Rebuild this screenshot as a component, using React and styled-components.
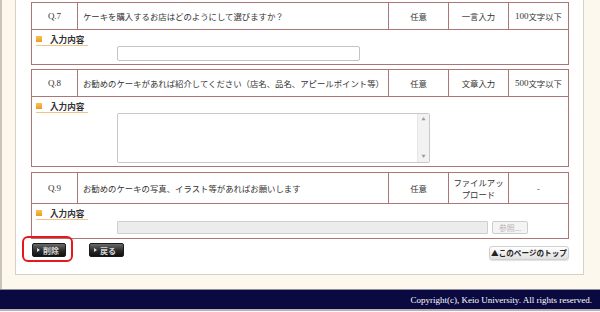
import React from "react";
import styled, { createGlobalStyle } from "styled-components";

const C = "#ad7676";

const Global = createGlobalStyle`
  html, body { margin: 0; padding: 0; }
  body {
    background: #fdf8ed;
    font-family: "Noto Sans CJK JP", "Noto Sans", sans-serif;
    color: #333;
    width: 600px;
    overflow: hidden;
  }
`;

const Main = styled.div`
  border-left: 2px solid #ccc4b8;
  padding: 0 16px 14px 13px;
`;

const Panel = styled.div`
  background: #fff;
  border: 1px solid #d6d0c6;
  border-top: none;
  padding: 2px 14px 14px 15px;
`;

const QBlock = styled.div`
  border: 1px solid ${C};
  margin-bottom: ${(p) => p.$mb || 4}px;
`;

const HeadRow = styled.div`
  display: grid;
  grid-template-columns: 45px 311px 60px 60px 60px;
  min-height: ${(p) => p.$h || 26}px;
  border-bottom: 1px solid ${C};
`;

const Cell = styled.div`
  display: flex;
  align-items: center;
  justify-content: ${(p) => (p.$left ? "flex-start" : "center")};
  text-align: center;
  padding: ${(p) => (p.$left ? "0 0 0 5px" : "0 2px")};
  border-left: ${(p) => (p.$first ? "none" : `1px solid ${C}`)};
  font-size: 8.4px;
  line-height: ${(p) => (p.$wrap ? "12px" : "11px")};
  color: #333;
  white-space: ${(p) => (p.$wrap ? "normal" : "nowrap")};
`;

const Num = styled.span`
  font-family: "Liberation Serif", serif;
  font-size: 9px;
`;

const Body = styled.div`
  padding: 3px 0 ${(p) => p.$pb || 3}px 4px;
`;

const Label = styled.div`
  display: flex;
  align-items: center;
  gap: 8px;
  width: 52px;
  height: 12px;
  border-bottom: 1px solid #f0c488;
  font-size: 8.6px;
  font-weight: bold;
  color: #333;
  white-space: nowrap;
`;

const Square = styled.span`
  width: 6px;
  height: 6px;
  background: linear-gradient(#f7c35a, #ee9a1c);
  flex: none;
`;

const Field = styled.div`
  margin-left: 81px;
  margin-top: ${(p) => p.$mt || 0}px;
`;

const TextInput = styled.div`
  width: 241px;
  height: 13px;
  border: 1px solid #c4c4c4;
  border-radius: 2px;
  background: #fff;
`;

const TextArea = styled.div`
  width: 311px;
  height: 48px;
  border: 1px solid #c8c8c8;
  border-radius: 2px;
  background: #fff;
  display: flex;
  justify-content: flex-end;
`;

const ScrollBar = styled.div`
  width: 11px;
  background: #f2f2f2;
  border-left: 1px solid #e6e6e6;
  display: flex;
  flex-direction: column;
  justify-content: space-between;
  align-items: center;
  padding: 3px 0;
  font-size: 4px;
  color: #999;
  line-height: 5px;
`;

const FileRow = styled.div`
  display: flex;
  align-items: center;
  gap: 4px;
`;

const FileBox = styled.div`
  width: 369px;
  height: 11px;
  background: #ececec;
  border: 1px solid #cfcfcf;
  border-radius: 1px;
`;

const BrowseBtn = styled.div`
  width: 34px;
  height: 11px;
  border: 1px solid #cdcdcd;
  border-radius: 2px;
  background: #f4f4f4;
  color: #b5b5b5;
  font-size: 8px;
  line-height: 11px;
  text-align: center;
`;

const ButtonRow = styled.div`
  display: flex;
  align-items: flex-start;
  padding-left: 1px;
  margin-top: 1px;
`;

const Highlight = styled.div`
  position: relative;
  &::after {
    content: "";
    position: absolute;
    left: -10px;
    right: -7px;
    top: -7px;
    bottom: -5px;
    border: 2.5px solid #e3191e;
    border-radius: 6px;
    pointer-events: none;
  }
`;

const DarkBtn = styled.div`
  display: flex;
  align-items: center;
  gap: 3px;
  width: ${(p) => p.$w}px;
  height: 14px;
  box-sizing: border-box;
  padding-left: 4px;
  background: linear-gradient(#6a6a6a, #2a2a2a 55%, #111);
  border: 1px solid #1a1a1a;
  border-radius: 2px;
  color: #d8d8d8;
  font-size: 8px;
  font-weight: bold;
  margin-left: ${(p) => p.$ml || 0}px;
`;

const Tri = styled.span`
  width: 0;
  height: 0;
  border-left: 3px solid #ddd;
  border-top: 2.5px solid transparent;
  border-bottom: 2.5px solid transparent;
`;

const TopBtn = styled.div`
  margin-left: auto;
  margin-top: 3px;
  width: 80px;
  height: 14px;
  box-sizing: border-box;
  border: 1px solid #d0d0d0;
  border-radius: 3px;
  background: linear-gradient(#ffffff, #e0e0e0);
  box-shadow: 0 1px 1px rgba(0, 0, 0, 0.12);
  font-size: 7.6px;
  font-weight: bold;
  color: #222;
  line-height: 12px;
  text-align: center;
  white-space: nowrap;
`;

const Footer = styled.div`
  border-top: 1px solid #8d8da0;
  border-bottom: 2px solid #b4b4b4;
  background: #0a0940;
  height: 19px;
  display: flex;
  align-items: center;
  justify-content: flex-end;
  padding-right: 8px;
  color: #fff;
  font-family: "Liberation Serif", serif;
  font-size: 9px;
`;

const questions = [
  {
    no: "Q.7",
    text: "ケーキを購入するお店はどのようにして選びますか？",
    type: "一言入力",
    limit: "100",
    field: "input",
  },
  {
    no: "Q.8",
    text: "お勧めのケーキがあれば紹介してください（店名、品名、アピールポイント等）",
    type: "文章入力",
    limit: "500",
    field: "textarea",
  },
  {
    no: "Q.9",
    text: "お勧めのケーキの写真、イラスト等があればお願いします",
    type: "ファイルアップロード",
    limit: null,
    field: "file",
  },
];

function FieldFor({ kind }) {
  if (kind === "input")
    return (
      <Field>
        <TextInput />
      </Field>
    );
  if (kind === "textarea")
    return (
      <Field>
        <TextArea>
          <ScrollBar>
            <span>▲</span>
            <span>▼</span>
          </ScrollBar>
        </TextArea>
      </Field>
    );
  return (
    <Field $mt={1}>
      <FileRow>
        <FileBox />
        <BrowseBtn>参照...</BrowseBtn>
      </FileRow>
    </Field>
  );
}

export default function App() {
  return (
    <>
      <Global />
      <Main>
        <Panel>
          {questions.map((q) => {
            const isFile = q.field === "file";
            return (
              <QBlock key={q.no} $mb={q.field === "textarea" ? 5 : 4}>
                <HeadRow $h={isFile ? 30 : 26}>
                  <Cell $first>
                    <Num>{q.no}</Num>
                  </Cell>
                  <Cell $left>{q.text}</Cell>
                  <Cell>任意</Cell>
                  <Cell $wrap={isFile}>{q.type}</Cell>
                  <Cell>
                    {q.limit ? (
                      <>
                        <Num>{q.limit}</Num>文字以下
                      </>
                    ) : (
                      "-"
                    )}
                  </Cell>
                </HeadRow>
                <Body $pb={isFile ? 4 : 3}>
                  <Label>
                    <Square />
                    入力内容
                  </Label>
                  <FieldFor kind={q.field} />
                </Body>
              </QBlock>
            );
          })}
          <ButtonRow>
            <Highlight>
              <DarkBtn $w={34}>
                <Tri />
                削除
              </DarkBtn>
            </Highlight>
            <DarkBtn $w={35} $ml={23}>
              <Tri />
              戻る
            </DarkBtn>
            <TopBtn>▲このページのトップ</TopBtn>
          </ButtonRow>
        </Panel>
      </Main>
      <Footer>Copyright(c), Keio University. All rights reserved.</Footer>
    </>
  );
}
